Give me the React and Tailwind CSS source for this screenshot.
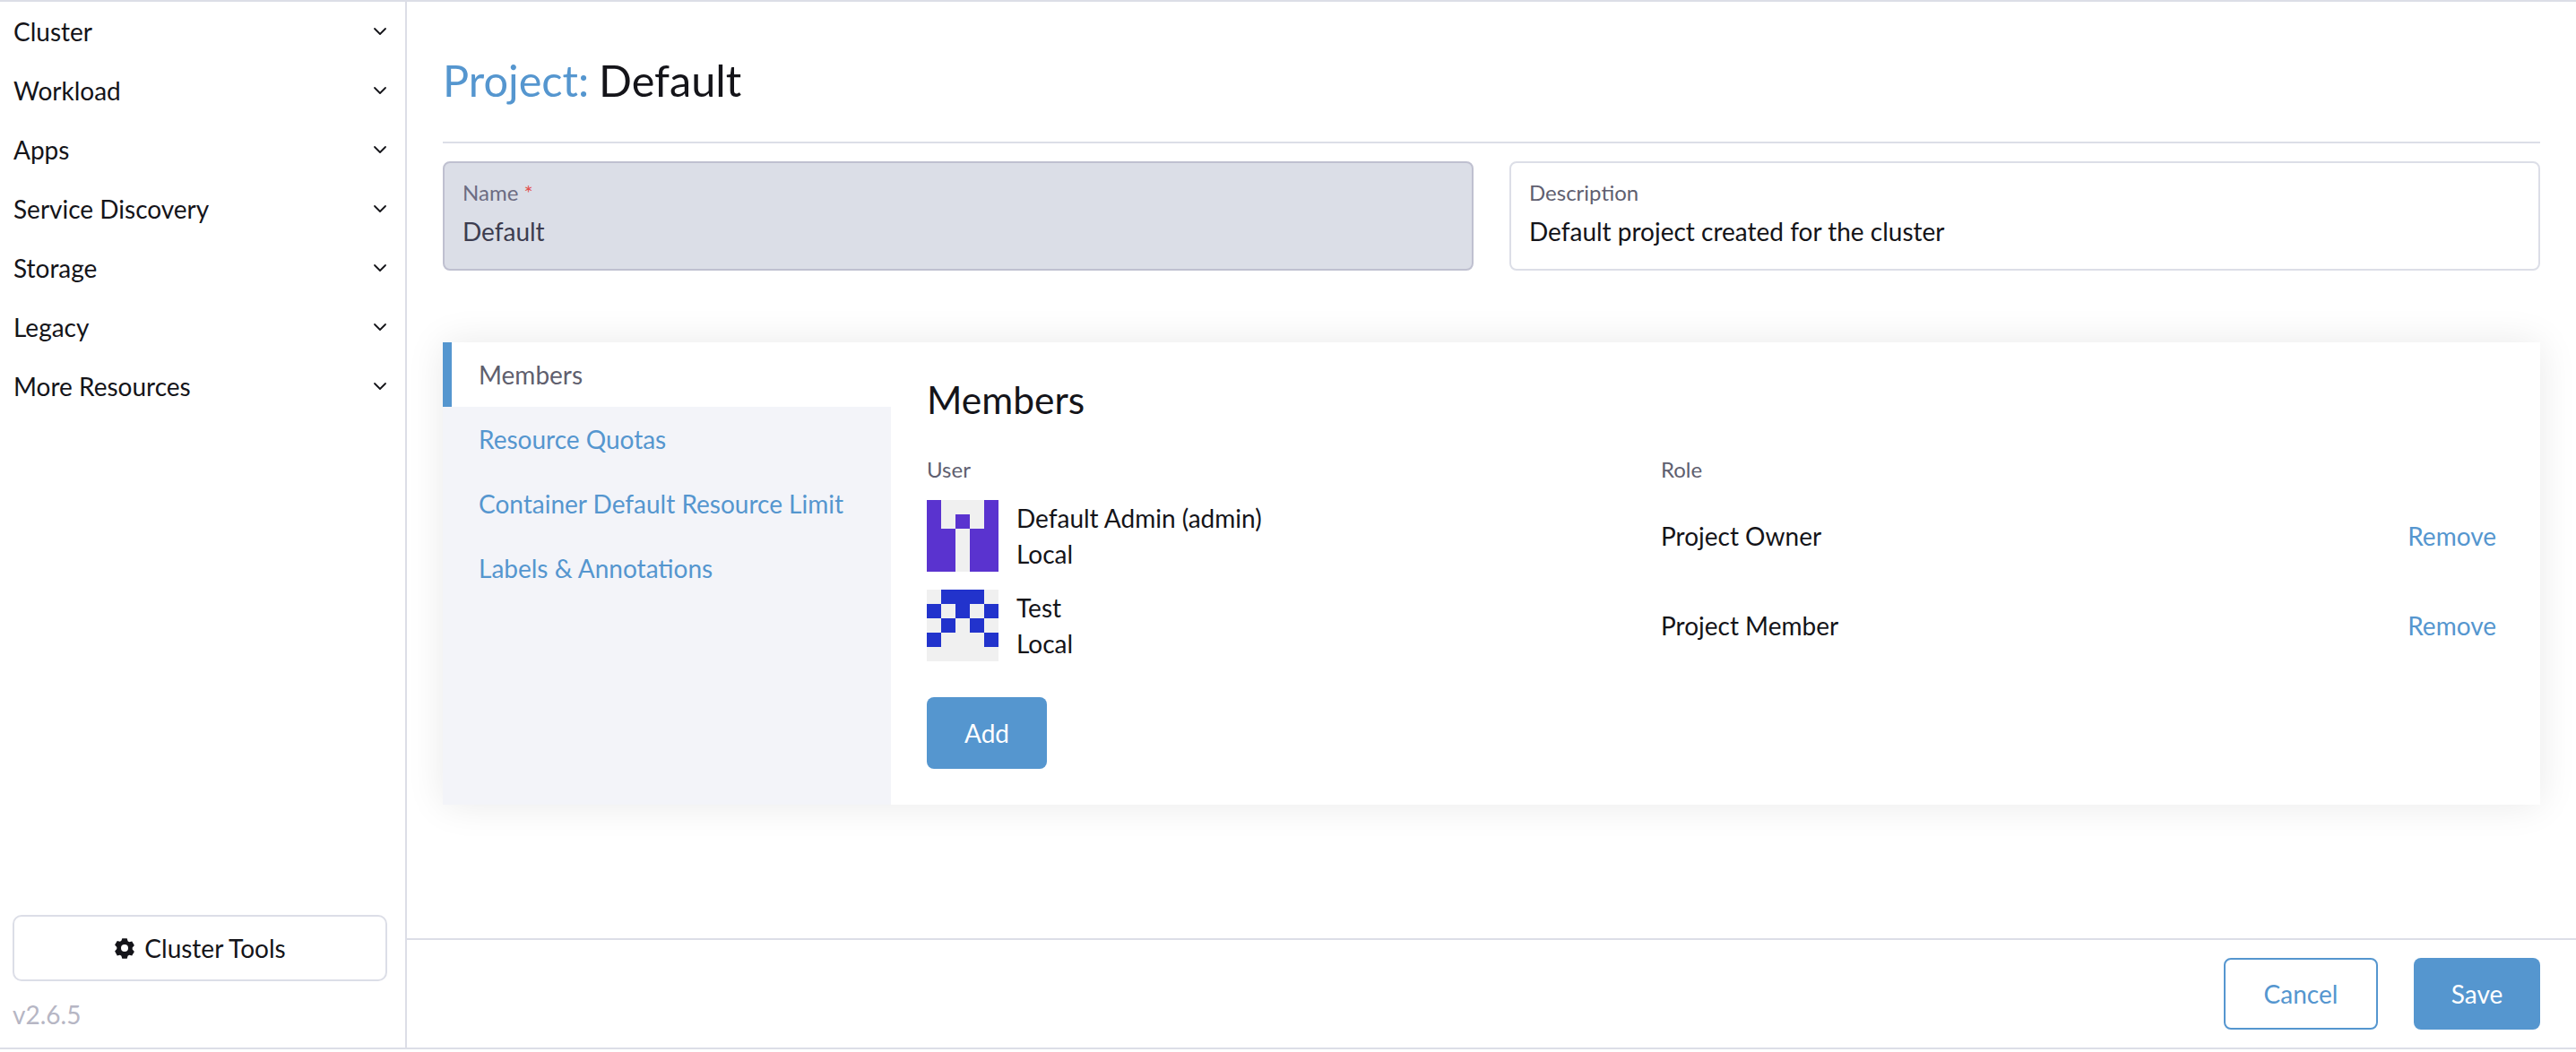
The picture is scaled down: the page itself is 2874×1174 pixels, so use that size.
const rows = ["Cluster", "Workload", "Apps", "Service Discovery", "Storage", "Legacy", "More Resources"];
const A1 = ["10001", "10101", "11011", "11011", "11011"];
const A2 = ["01110", "10101", "01010", "10001", "00000"];

function Chevron() {
  return (
    <svg width="16" height="16" viewBox="0 0 16 16" fill="none" stroke="#141419" strokeWidth="1.8" strokeLinecap="round" strokeLinejoin="round">
      <path d="M2 5l6 6 6-6" />
    </svg>
  );
}

function Avatar({ map, on }) {
  return (
    <div className="grid grid-cols-5 w-[80px] h-[80px] shrink-0 bg-[#f0f0f0]">
      {map.join("").split("").map((c, i) => (
        <div key={i} className="w-[16px] h-[16px]" style={c === "1" ? { background: on } : undefined} />
      ))}
    </div>
  );
}

function Gear() {
  return (
    <svg width="24" height="24" viewBox="0 0 24 24" fill="#141419">
      <path fillRule="evenodd" d="M9.3 1.2h5.4l.9 3.1 1.5.9 3.1-.8 2.7 4.7-2.2 2.3v2.200l2.2 2.3-2.7 4.7-3.1-.8-1.5.9-.9 3.1H9.3l-.9-3.1-1.5-.9-3.1.8L1.1 15.400l2.200-2.300v-2.200L1.100 8.600l2.700-4.700 3.100.8 1.500-.9zM12 8a4 4 0 100 8 4 4 0 000-8z" />
    </svg>
  );
}

function Member({ map, on, name, role }) {
  return (
    <div className="flex items-center h-[100px]">
      <div className="flex items-center w-[819px]">
        <Avatar map={map} on={on} />
        <div className="ml-[20px] leading-[40px]">
          <div>{name}</div>
          <div>Local</div>
        </div>
      </div>
      <div className="flex-1">{role}</div>
      <div className="text-[#5596cf]">Remove</div>
    </div>
  );
}

export default function App() {
  return (
    <div className="w-[2874px] h-[1174px] bg-white text-[#141419] text-[28px] font-['Lato',sans-serif] overflow-hidden">
      <div className="flex h-[1171px] border-y-2 border-[#dcdee7]">
        <aside className="w-[454px] shrink-0 border-r-2 border-[#dcdee7] flex flex-col">
          <nav className="flex flex-col">
            {rows.map((r) => (
              <div key={r} className="flex items-center justify-between h-[66px] pl-[15px] pr-[20px]">
                <span>{r}</span>
                <Chevron />
              </div>
            ))}
          </nav>
          <div className="mt-auto px-[14px] pb-[19px]">
            <div className="h-[74px] border-2 border-[#dcdee7] rounded-[10px] flex items-center justify-center gap-[10px] w-[418px]">
              <Gear />
              <span>Cluster Tools</span>
            </div>
            <div className="mt-[19px] text-[#b6b6c4] leading-[36px]">v2.6.5</div>
          </div>
        </aside>
        <main className="flex-1 flex flex-col">
          <div className="flex-1 px-[40px]">
            <div className="h-[158px] pt-[19px] flex items-center border-b-2 border-[#dcdee7] text-[48.6px]">
              <span className="text-[#5596cf]">Project:</span>
              <span className="ml-[11px]">Default</span>
            </div>
            <div className="flex gap-[40px] mt-[20px]">
              <div className="w-[1150px] h-[122px] rounded-[8px] border-2 border-[#bfc0d0] bg-[#dbdee7] pl-[20px] pt-[17px]">
                <div className="text-[24px] leading-[32px] text-[#6c6c82]">Name <span className="text-[#e2514f]">*</span></div>
                <div className="mt-[9px] leading-[36px] text-[#3d3d50]">Default</div>
              </div>
              <div className="flex-1 h-[122px] rounded-[8px] border-2 border-[#dcdee7] pl-[20px] pt-[17px]">
                <div className="text-[24px] leading-[32px] text-[#5f5f70]">Description</div>
                <div className="mt-[9px] leading-[36px]">Default project created for the cluster</div>
              </div>
            </div>
            <div className="flex h-[516px] mt-[80px] shadow-[0_0_40px_rgba(0,0,0,0.09)]">
              <div className="w-[500px] bg-[#f3f4f9]">
                <div className="h-[72px] bg-white border-l-[10px] border-[#5596cf] pl-[30px] flex items-center text-[#5f5f6e]">Members</div>
                {["Resource Quotas", "Container Default Resource Limit", "Labels & Annotations"].map((t) => (
                  <div key={t} className="h-[72px] pl-[40px] flex items-center text-[#5596cf]">{t}</div>
                ))}
              </div>
              <div className="flex-1 bg-white pl-[40px] pr-[49px]">
                <h2 className="text-[42.5px] leading-[48px] mt-[40px]">Members</h2>
                <div className="flex mt-[38px] text-[24px] leading-[32px] text-[#5f5f70]">
                  <div className="w-[819px]">User</div>
                  <div>Role</div>
                </div>
                <div className="mt-[8px]">
                  <Member map={A1} on="#5a33cf" name="Default Admin (admin)" role="Project Owner" />
                  <Member map={A2} on="#2233cc" name="Test" role="Project Member" />
                </div>
                <button className="mt-[30px] w-[134px] h-[80px] rounded-[8px] bg-[#5596cf] text-white">Add</button>
              </div>
            </div>
          </div>
          <div className="h-[122px] border-t-2 border-[#dcdee7] px-[40px] flex items-center justify-end gap-[40px]">
            <button className="w-[172px] h-[80px] rounded-[8px] border-2 border-[#5596cf] text-[#5596cf]">Cancel</button>
            <button className="w-[141px] h-[80px] rounded-[8px] bg-[#5596cf] text-white">Save</button>
          </div>
        </main>
      </div>
    </div>
  );
}
